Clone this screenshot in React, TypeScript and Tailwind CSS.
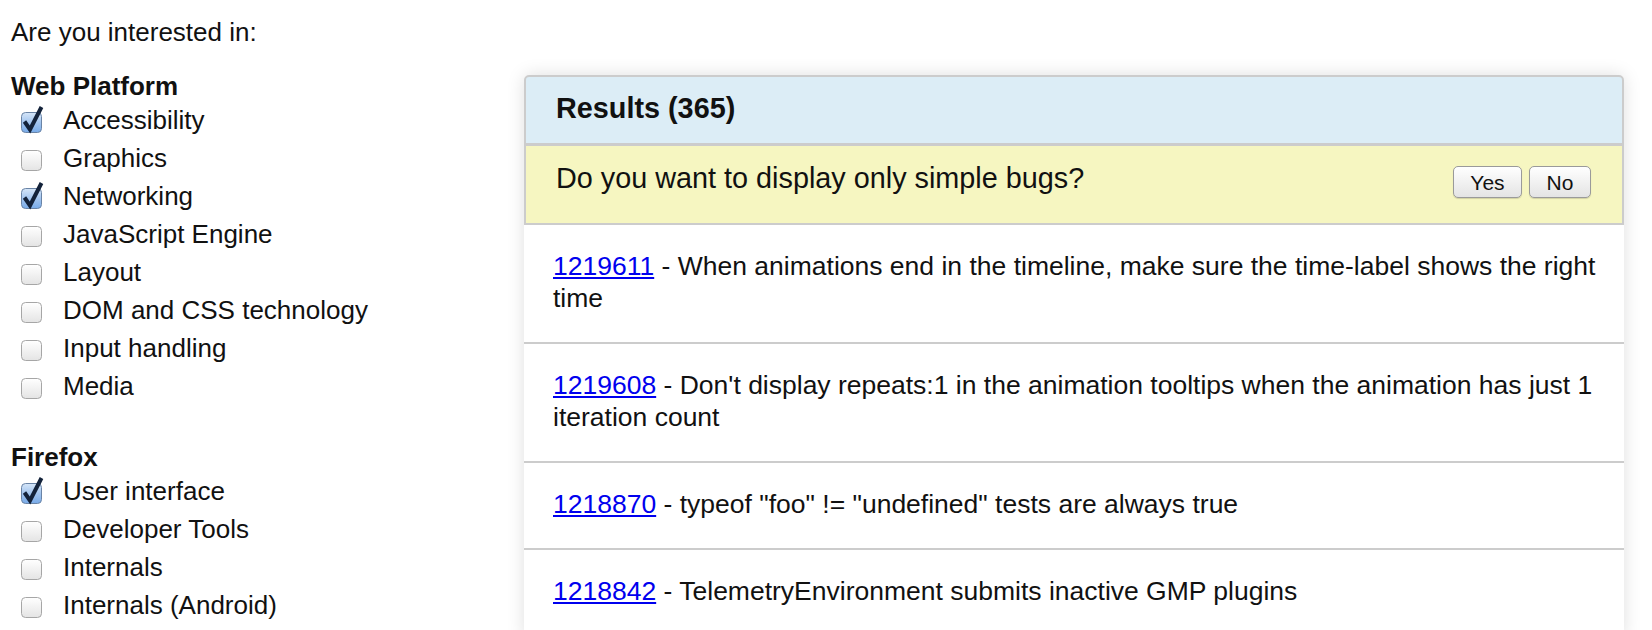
import React from 'react';

const groups = [
  {
    title: 'Web Platform',
    items: [
      { label: 'Accessibility', checked: true },
      { label: 'Graphics', checked: false },
      { label: 'Networking', checked: true },
      { label: 'JavaScript Engine', checked: false },
      { label: 'Layout', checked: false },
      { label: 'DOM and CSS technology', checked: false },
      { label: 'Input handling', checked: false },
      { label: 'Media', checked: false },
    ],
  },
  {
    title: 'Firefox',
    items: [
      { label: 'User interface', checked: true },
      { label: 'Developer Tools', checked: false },
      { label: 'Internals', checked: false },
      { label: 'Internals (Android)', checked: false },
    ],
  },
];

const bugs = [
  { id: '1219611', text: 'When animations end in the timeline, make sure the time-label shows the right time' },
  { id: '1219608', text: "Don't display repeats:1 in the animation tooltips when the animation has just 1 iteration count" },
  { id: '1218870', text: 'typeof "foo" != "undefined" tests are always true' },
  { id: '1218842', text: 'TelemetryEnvironment submits inactive GMP plugins' },
];

function Checkbox({ checked }: { checked: boolean }) {
  return (
    <svg width="24" height="28" viewBox="0 0 24 28" className="shrink-0">
      <defs>
        <linearGradient id="cbOff" x1="0" y1="0" x2="0" y2="1">
          <stop offset="0" stopColor="#ffffff" />
          <stop offset="1" stopColor="#e4e4e4" />
        </linearGradient>
        <linearGradient id="cbOn" x1="0" y1="0" x2="0" y2="1">
          <stop offset="0" stopColor="#d6e6f8" />
          <stop offset="0.5" stopColor="#a3c5ef" />
          <stop offset="1" stopColor="#78abe9" />
        </linearGradient>
      </defs>
      <rect
        x="1.5"
        y="6.5"
        width="20"
        height="20"
        rx="4"
        fill={checked ? 'url(#cbOn)' : 'url(#cbOff)'}
        stroke={checked ? '#6a84a6' : '#a6a6a6'}
        strokeWidth="1"
      />
      {checked && (
        <path d="M4.5 15.5 L10 23.5 L21.5 1" fill="none" stroke="#13223a" strokeWidth="4" strokeLinejoin="miter" />
      )}
    </svg>
  );
}

export default function App() {
  return (
    <div className="flex bg-white text-[#111] min-h-[630px]" style={{ fontFamily: '"Liberation Sans", Arial, sans-serif' }}>
      {/* Filters */}
      <div className="w-[524px] shrink-0 pl-[11px] pt-[17px]">
        <p className="text-[26px] leading-[30px] mb-[24px]">Are you interested in:</p>
        {groups.map((g, gi) => (
          <div key={g.title} className={gi > 0 ? 'mt-[37px]' : ''}>
            <h3 className="text-[26px] leading-[30px] font-bold">{g.title}</h3>
            {g.items.map(item => (
              <label key={item.label} className="flex items-center h-[38px] pl-[9px] gap-[19px] text-[26px]">
                <Checkbox checked={item.checked} />
                <span>{item.label}</span>
              </label>
            ))}
          </div>
        ))}
      </div>

      {/* Results panel */}
      <div className="mt-[75px] w-[1100px] shrink-0 self-start rounded-t-[5px] bg-white shadow-[0_0_18px_rgba(0,0,0,0.13)]">
        <div className="bg-[#dcedf6] border-2 border-b-[3px] border-[#cccccc] rounded-t-[5px] pl-[30px] pt-[16px] pb-[20px]">
          <h2 className="text-[28.8px] leading-[30px] font-bold">Results (365)</h2>
        </div>
        <div className="bg-[#f6f6c1] border-x-2 border-b-2 border-[#cccccc] pl-[30px] pr-[31px] pt-[17px] pb-[30px] flex items-start justify-between">
          <span className="text-[28.8px] leading-[30px]">Do you want to display only simple bugs?</span>
          <div className="flex gap-[7px] h-[30px] items-start">
            <button className="mt-[3px] h-[32px] w-[69px] rounded-[5px] border border-[#9a9a9a] bg-gradient-to-b from-white to-[#e4e4e4] text-[21px] shadow-[0_1px_1px_rgba(0,0,0,0.15)]">Yes</button>
            <button className="mt-[3px] h-[32px] w-[62px] rounded-[5px] border border-[#9a9a9a] bg-gradient-to-b from-white to-[#e4e4e4] text-[21px] shadow-[0_1px_1px_rgba(0,0,0,0.15)]">No</button>
          </div>
        </div>
        {bugs.map(b => (
          <div key={b.id} className="border-b-2 border-[#cccccc] pl-[29px] pr-[18px] pt-[25px] pb-[28px] text-[26.5px] leading-[32px]">
            <a href="#" className="text-[#0000ee] underline">{b.id}</a> - {b.text}
          </div>
        ))}
      </div>
    </div>
  );
}
